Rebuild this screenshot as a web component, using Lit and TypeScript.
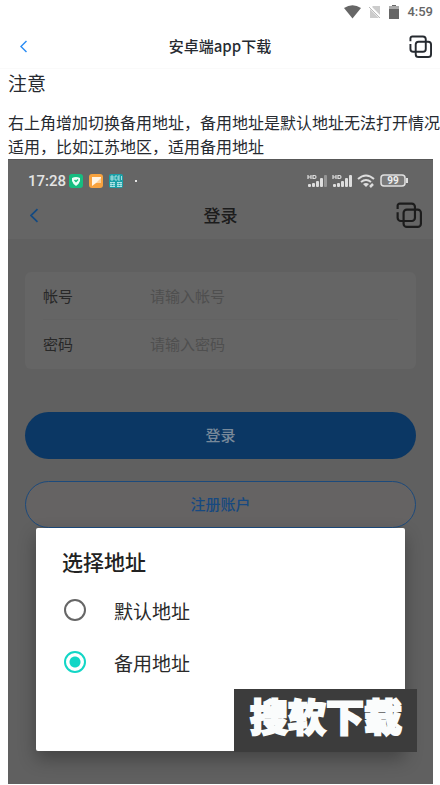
import { LitElement, html, css, svg } from "lit";
import { customElement, property, state } from "lit/decorators.js";

@customElement("copy-icon")
class CopyIcon extends LitElement {
  static styles = css`
    :host { display: block; }
    .icon { display: block; width: 100%; height: auto; fill: none; stroke: currentColor; stroke-width: 2; }
  `;
  render() {
    return html`<svg class="icon" viewBox="0 0 24 24" aria-hidden="true">
      <path d="M1.500 6.500V3.500a2 2 0 0 1 2-2h11a3 3 0 0 1 3 3v10a3 3 0 0 1-3 3h-10a3 3 0 0 1-3-3v-5" />
      <rect x="7" y="7" width="16" height="16" rx="3" />
    </svg>`;
  }
}

@customElement("nav-bar")
class NavBar extends LitElement {
  @property() heading = "";
  static styles = css`
    :host { display: grid; grid-template-columns: 48px 1fr 48px; align-items: center; }
    .back, .switch { border: 0; background: none; padding: 0; color: inherit; font: inherit; display: flex; }
    .back { color: var(--back); padding-left: var(--back-inset); }
    .chevron { display: block; height: var(--chevron); width: auto; fill: none; stroke: currentColor; stroke-width: 1.600; }
    .heading { margin: 0; text-align: center; font: inherit; white-space: nowrap; }
    .switch { justify-self: end; padding-right: var(--switch-inset); }
    .copy { width: var(--copy); }
  `;
  render() {
    return html`
      <button class="back" aria-label="返回">
        <svg class="chevron" viewBox="0 0 8 14" aria-hidden="true"><path d="M7 1 1 7l6 6" /></svg>
      </button>
      <h1 class="heading">${this.heading}</h1>
      <button class="switch" aria-label="切换地址"><copy-icon class="copy"></copy-icon></button>
    `;
  }
}

const signal = (last: number) => svg`
  <path d="M1 1v4M4 1v4M1 3h3M6 1.500v3h1.500a1.500 1.500 0 0 0 0-3z" fill="none" stroke="#dedede" stroke-width="1.200" />
  <g fill="#dedede">
    <rect x="1" y="10" width="3" height="3" rx="1" />
    <rect x="5" y="9" width="3" height="4" rx="1" />
    <rect x="9" y="7" width="3" height="6" rx="1" />
    <rect x="13" y="4" width="3" height="9" rx="1" />
    <rect x="17" y="1" width="3" height="12" rx="1" opacity=${last} />
  </g>`;

@customElement("app-root")
class AppRoot extends LitElement {
  @state() private choice = "备用地址";

  static styles = css`
    :host {
      display: block;
      min-height: 100vh;
      background: #fff;
      color: #262a30;
      font-family: "Noto Sans CJK SC", "Noto Sans", sans-serif;
    }
    * { box-sizing: border-box; }
    svg { display: block; }
    .system { display: flex; justify-content: flex-end; align-items: center; gap: 8px; height: 24px; padding-right: 7px; color: #666; }
    .clock { font: 500 13px/24px Roboto, sans-serif; }
    .page-nav {
      height: 45px;
      border-bottom: 1px solid #fafafa;
      font-size: 15px;
      font-weight: 500;
      line-height: 24px;
      --back: #2a8cf4;
      --back-inset: 20px;
      --chevron: 13px;
      --switch-inset: 8px;
      --copy: 23px;
    }
    .notice { padding-left: 8px; }
    .notice-title { margin: 0 0 13px; font-size: 19px; line-height: 28px; font-weight: 400; }
    .notice-text { margin: 0 0 1px; font-size: 16px; line-height: 24px; }
    .shot { position: relative; margin: 0 7px 0 8px; padding-bottom: 33px; background: #606060; overflow: hidden; }
    .shot-top { background: #656565; border-top: 1px solid #585858; }
    .shot-system { display: flex; align-items: center; gap: 5px; height: 31px; padding: 10px 25px 0 20px; color: #e4e4e4; }
    .shot-clock { font: 500 15px/20px Roboto, sans-serif; }
    .apps { display: flex; align-items: center; gap: 6px; flex: 1; margin-left: -2px; }
    .more { width: 2px; height: 2px; margin-left: 6px; background: #e4e4e4; }
    .shot-nav {
      height: 48px;
      color: #1c1c1c;
      font-size: 17px;
      font-weight: 500;
      line-height: 24px;
      --back: #134a82;
      --back-inset: 22px;
      --chevron: 15px;
      --switch-inset: 11px;
      --copy: 26px;
    }
    .form { margin: 33px 17px 0; }
    .card { padding-bottom: 2px; background: #656565; border-radius: 6px; }
    .field { display: flex; align-items: center; height: 47px; padding: 0 18px; font-size: 15px; color: #282828; }
    .field-name { width: 107px; }
    .field-input { flex: 1; min-width: 0; border: 0; padding: 0; background: none; font: inherit; color: inherit; outline: 0; }
    .field-input::placeholder { color: #4f4f4f; opacity: 1; }
    .line { height: 1px; margin: 0 18px; background: #626262; }
    .action { display: block; width: 100%; height: 47px; border-radius: 24px; padding: 0 0 2px; font: 500 15px/24px "Noto Sans CJK SC", sans-serif; }
    .login { margin-top: 43px; border: 0; background: #0b3764; color: #78899a; }
    .register { margin-top: 22px; border: 1px solid #1c4a7c; background: #656363; color: #174980; }
    .dialog {
      position: relative;
      margin: 0 28px;
      padding: 19px 26px 63px;
      border: 0;
      border-radius: 2px;
      background: #fff;
      box-shadow: 0 8px 18px rgba(0, 0, 0, 0.3);
      color: #222;
    }
    .dialog-title { margin: 0 0 9px; font-size: 21px; line-height: 28px; font-weight: 500; }
    .option { display: flex; align-items: center; gap: 28px; height: 52px; font-size: 19px; color: #2a2a2a; }
    .radio { appearance: none; width: 22px; height: 22px; margin: 0 0 0 2px; border: 2px solid #666; border-radius: 50%; }
    .radio:checked { border-color: #12d6c6; background: radial-gradient(circle, #12d6c6 5px, #fff 6px); }
    .mark {
      position: absolute;
      right: 16px;
      bottom: 32px;
      padding: 0 15px 11px 16px;
      background: #3c3c3c;
      color: #fafcfc;
      font-size: 38px;
      line-height: 52px;
      font-weight: 900;
      -webkit-text-stroke: 2px #fafcfc;
    }
  `;

  private option(name: string) {
    return html`<label class="option">
      <input class="radio" type="radio" name="address" .checked=${this.choice === name}
        @change=${() => (this.choice = name)} />
      <span>${name}</span>
    </label>`;
  }

  render() {
    return html`
      <div class="system">
        <svg width="17" height="14" viewBox="0 0 17 14"><path d="M0 3Q8.500-2.500 17 3L8.500 13.500z" fill="#666" /></svg>
        <svg width="12" height="14" viewBox="0 0 12 14">
          <path d="M4 1h7v12H1V4z" fill="#ccc" /><path d="M0 1l12 12" stroke="#fff" stroke-width="3" /><path d="M0 2l11 11" stroke="#bbb" />
        </svg>
        <svg width="10" height="14" viewBox="0 0 10 14">
          <path d="M3 0h4v1h3v13H0V1h3z" fill="#666" /><path d="M0 1h10v3H0z" fill="#aaa" />
        </svg>
        <span class="clock">4:59</span>
      </div>
      <nav-bar class="page-nav" heading="安卓端app下载"></nav-bar>
      <section class="notice">
        <h2 class="notice-title">注意</h2>
        <p class="notice-text">右上角增加切换备用地址，备用地址是默认地址无法打开情况适用，比如江苏地区，适用备用地址</p>
      </section>
      <main class="shot">
        <div class="shot-top">
          <div class="shot-system">
            <span class="shot-clock">17:28</span>
            <div class="apps">
              <svg width="14" height="14" viewBox="0 0 14 14">
                <rect width="14" height="14" rx="3" fill="#16bd80" />
                <path d="M3 4q4-2 8 0v3q-1 3-4 5-3-2-4-5z" fill="#eafff6" /><path d="M5.500 6l1.500 1.500 2-2" fill="none" stroke="#16bd80" stroke-width="1.500" />
              </svg>
              <svg width="14" height="14" viewBox="0 0 14 14">
                <rect width="14" height="14" rx="3" fill="#f7a23e" /><path d="M3 3h9v6H7l-4 3z" fill="#fff4e4" /><path d="M7 9l5-5v5z" fill="#fbd09a" />
              </svg>
              <svg width="14" height="14" viewBox="0 0 14 14">
                <rect width="14" height="14" rx="2" fill="#1a9fa6" />
                <path d="M2 2v4M2 2h2v4H2M2 4h2M8 2H6v4h2M11 2H9v4h2M9 4h2M12.500 2v4M1 8.500h5M1 10.500h5M1 12.500h5M2 8v5M5 8v5M8 8.500h5M8 10.500h5M8 12.500h5M9 8v5M12 8v5" fill="none" stroke="#c8eeee" stroke-width="0.800" />
              </svg>
              <span class="more"></span>
            </div>
            <svg width="20" height="14" viewBox="0 0 20 14">${signal(0.4)}</svg>
            <svg width="20" height="14" viewBox="0 0 20 14">${signal(1)}</svg>
            <svg width="18" height="14" viewBox="0 0 18 14">
              <path d="M1 5q8-7 16 0M4 8q5-4 10 0" fill="none" stroke="#dedede" stroke-width="2" />
              <path d="M6 10q3-2 6 0l-3 3z" fill="#dedede" /><path d="M13 13l3-3" stroke="#dedede" stroke-width="2.500" />
            </svg>
            <svg width="28" height="14" viewBox="0 0 28 14">
              <rect x="1" y="1" width="24" height="11" rx="3" fill="#7a7a7a" stroke="#e0e0e0" stroke-width="1.500" />
              <path d="M27 4v5" stroke="#e0e0e0" stroke-width="2" />
              <text x="13" y="10" text-anchor="middle" font-family="Roboto, sans-serif" font-size="10" font-weight="700" fill="#eee">99</text>
            </svg>
          </div>
          <nav-bar class="shot-nav" heading="登录"></nav-bar>
        </div>
        <form class="form" @submit=${(e: Event) => e.preventDefault()}>
          <div class="card">
            <label class="field"><span class="field-name">帐号</span><input class="field-input" placeholder="请输入帐号" /></label>
            <div class="line"></div>
            <label class="field"><span class="field-name">密码</span><input class="field-input" type="password" placeholder="请输入密码" /></label>
          </div>
          <button class="action login">登录</button>
          <button class="action register" type="button">注册账户</button>
        </form>
        <section class="dialog" role="dialog" aria-labelledby="pick">
          <h2 class="dialog-title" id="pick">选择地址</h2>
          ${this.option("默认地址")}
          ${this.option("备用地址")}
        </section>
        <div class="mark">搜软下载</div>
      </main>
    `;
  }
}
